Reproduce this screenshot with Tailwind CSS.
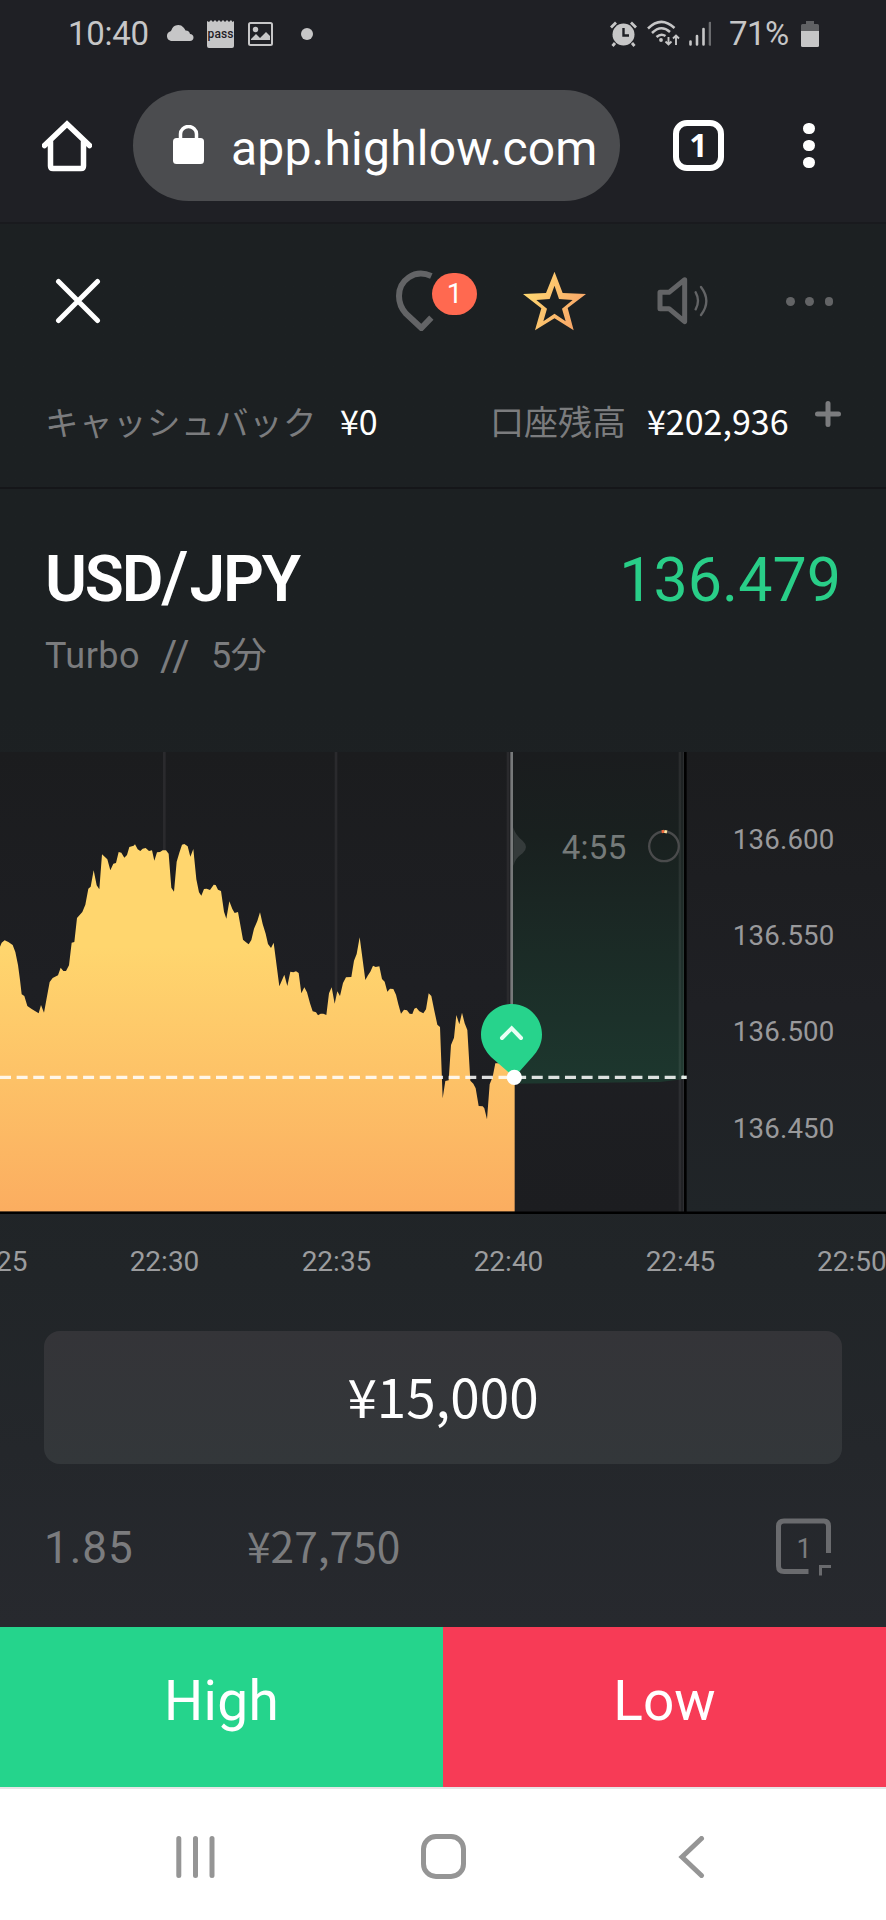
<!DOCTYPE html>
<html lang="ja">
<head>
  <meta charset="UTF-8" />
  <meta name="viewport" content="width=device-width, initial-scale=1.0"/>
  <title>USD/JPY - HighLow</title>

  <!-- Tailwind CSS -->
  <script src="https://cdn.jsdelivr.net/npm/@tailwindcss/browser@4"></script>
</head>
<body class="w-[886px] h-[1920px] overflow-hidden bg-[#1f2025] font-['Roboto','Noto_Sans_CJK_JP',sans-serif] text-white">

  <!-- Status bar -->
  <div class="flex items-center h-[67px] text-[#c6c6c7] text-[33px] leading-none">
    <span class="ml-[68px] w-[80px] tracking-[-0.3px]">10:40</span>
    <svg class="ml-[18px] mb-px" width="28" height="16" viewBox="0 0 28 16" fill="currentColor"><path d="M5 16a5 5 0 0 1-1-9.5C5 6 5 6 5.5 5a7 7 0 0 1 12-2.500c1 1 1.500 2 2 3 3 0 4 1.500 4.500 3.500 2 0 3.500 1.500 3.500 3.500S26 16 24 16z"/></svg>
    <svg class="ml-[13px]" width="27" height="28" viewBox="0 0 27 28"><path d="M0 1l2 1 2-2 2 2 2-2 2 2 2-2 2 2 2-2 2 2 2-2 2 2 2-2 1.500 2 1.500-1v25a2 2 0 0 1-2 2H2a2 2 0 0 1-2-2z" fill="#c6c6c7"/><text x="13.500" y="18" text-anchor="middle" font-size="12" font-weight="500" textLength="26" fill="#1f2025">pass</text></svg>
    <svg class="ml-[14px]" width="25" height="24" viewBox="0 0 25 24"><rect x="1" y="1" width="23" height="22" rx="1.500" fill="none" stroke="#c6c6c7" stroke-width="2"/><circle cx="7.500" cy="7.500" r="2.700" fill="#c6c6c7"/><path d="M3 17l5-5 4 4 6-6 4 4v4H3z" fill="#c6c6c7"/></svg>
    <span class="ml-[28px] size-3 rounded-full bg-[#c6c6c7]"></span>

    <svg class="ml-[297px]" width="27" height="26" viewBox="0 0 27 26"><circle cx="13.500" cy="13.500" r="11" fill="#c6c6c7"/><path d="M1 6.500l5-5M26 6.500l-5-5M5 22l-2.500 3M22 22l2.500 3" stroke="#c6c6c7" stroke-width="2.800"/><path d="M13.500 7v7.500h5.500" fill="none" stroke="#1f2025" stroke-width="2.400"/></svg>
    <svg class="ml-[10px]" width="33" height="27" viewBox="0 0 33 27" fill="none" stroke="#c6c6c7" stroke-width="2.500"><path d="M1 8.500Q14 -4.500 27.500 8M5 13Q14 4 23 12M9.500 17Q14 13 18.500 16"/><circle cx="14" cy="20" r="1.900" fill="#c6c6c7" stroke="none"/><path d="M21.500 17v7M18.500 21.500l3 3 3-3M29 25v-8M26 18.500l3-3 3 3" stroke-width="1.900"/></svg>
    <svg class="ml-[9px]" width="22" height="26" viewBox="0 0 22 26" fill="none" stroke="#c6c6c7" stroke-width="2.600" stroke-linecap="round"><path d="M1.500 20.500v3M8 15v8.500M14.500 8v15.500"/><path d="M21 2v21.500" stroke="#6b6c6f"/></svg>
    <span class="ml-[18px] w-[62px] tracking-[-0.5px]">71%</span>
    <svg class="ml-[10px]" width="18" height="26" viewBox="0 0 18 26"><path d="M5 0h8v3h3.500a1.500 1.500 0 0 1 1.500 1.500V10H0V4.500A1.500 1.500 0 0 1 1.500 3H5z" fill="#606164"/><path d="M0 10h18v14.500a1.500 1.500 0 0 1-1.500 1.500h-15A1.500 1.500 0 0 1 0 24.500z" fill="#c6c6c7"/></svg>
  </div>

  <!-- Browser toolbar -->
  <div class="flex items-center h-[157px] pt-0.5 border-b-2 border-[#191a1e]">
    <svg class="ml-[42px]" width="50" height="52" viewBox="0 0 50 52" fill="none" stroke="white" stroke-linejoin="round" stroke-linecap="round"><path d="M2.500 25.500L25 4l22.500 21.500" stroke-width="5.500" stroke-linejoin="miter"/><path d="M8.500 22v24q0 2.500 2.500 2.500h28q2.500 0 2.500-2.500V22" stroke-width="5.500"/></svg>
    <div class="flex items-center ml-[41px] w-[487px] h-[111px] rounded-full bg-[#4b4c4f]">
      <svg class="ml-[40px] mb-0.5" width="31" height="40" viewBox="0 0 31 40"><rect y="13" width="31" height="26" rx="3.500" fill="white"/><path d="M7.500 14V9a8 7.500 0 0 1 16 0v5" fill="none" stroke="white" stroke-width="3.500"/></svg>
      <span class="ml-[27px] mt-[6px] text-[48px] leading-none tracking-[0.2px]">app.highlow.com</span>
    </div>
    <div class="flex items-center justify-center ml-[53px] size-[51px] pb-0.5 rounded-[14px] border-[6px] border-white font-['Noto_Sans',sans-serif] font-bold text-[32px] leading-none">1</div>
    <div class="flex flex-col gap-[5.500px] ml-[79px]">
      <span class="size-[11.500px] rounded-full bg-white"></span>
      <span class="size-[11.500px] rounded-full bg-white"></span>
      <span class="size-[11.500px] rounded-full bg-white"></span>
    </div>
  </div>

  <!-- App -->
  <main class="h-[1403px] bg-linear-to-b from-[#1c2022] from-35% via-[#212528] via-75% to-[#27292e]">

    <header class="h-[265px] border-b-2 border-[#151619]">
      <div class="flex items-start h-[150px] pt-[46px] text-[#636466]">
        <svg class="ml-[55px] mt-[8px]" width="46" height="46" viewBox="0 0 46 46" stroke="white" stroke-width="5" stroke-linecap="round"><path d="M3.500 3.500l39 39M42.500 3.500l-39 39"/></svg>
        <div class="relative ml-[295px]">
          <svg width="40" height="61" viewBox="0 0 120 183" fill="none" stroke="currentColor" stroke-width="18"><path d="M106 18C55 -5 9 32 9 78C9 102 18 118 30 131L76 174L106 143"/></svg>
          <span class="absolute left-[36px] top-[3px] flex items-center justify-center w-[45px] h-[42px] rounded-full bg-[#ff6950] text-white text-[28px] leading-none">1</span>
        </div>
        <svg class="ml-[86px]" width="65" height="62" viewBox="0 0 195 186">
          <defs>
            <linearGradient id="starFill" x1="0" y1="0.300" x2="1" y2="0.700">
              <stop offset="0" stop-color="#ffdb72"/>
              <stop offset="1" stop-color="#f8a267"/>
            </linearGradient>
          </defs>
          <path fill="url(#starFill)" fill-rule="evenodd" d="M97.500 5L122 69L192 72L137 114L155 181L97.500 145L39 181L58 115L3 72L72 69ZM97.500 47L83 87L43 90L75 116L64 154L97.500 131L131 154L120 116L152 90L111 87Z"/>
        </svg>
        <svg class="ml-[69.500px] mt-[5px]" width="54" height="52" viewBox="0 0 162 156" fill="none" stroke="currentColor" stroke-linejoin="round" stroke-linecap="round"><path d="M9 52v49h27l47 39V14L36 52z" stroke-width="15"/><path d="M116 52q14 25 0 51M132 36q32 42 0 84" stroke-width="7"/></svg>
        <div class="flex gap-[10.700px] ml-[75.500px] mt-[27px]">
          <span class="size-[8.700px] rounded-full bg-current"></span>
          <span class="size-[8.700px] rounded-full bg-current"></span>
          <span class="size-[8.700px] rounded-full bg-current"></span>
        </div>
      </div>
      <div class="flex items-center h-[96px] pb-[3px] font-['Noto_Sans_CJK_JP',sans-serif] text-[33.500px] leading-none text-[#7b7c7e]">
        <span class="ml-[45px] w-[276px] tracking-[0.500px]">キャッシュバック</span>
        <span class="ml-[19px] w-[150px] text-[34px] text-white">¥0</span>
        <span class="w-[157px] text-[34px]">口座残高</span>
        <span class="w-[167px] text-[34px] text-white">¥202,936</span>
        <svg class="mb-[14px]" width="28" height="28" viewBox="0 0 28 28" stroke="currentColor" stroke-width="5" stroke-linecap="round"><path d="M14 3.500v21M3.500 14h21"/></svg>
      </div>
    </header>

    <section class="h-[263px] px-[45px] pt-[58px]">
      <div class="flex justify-between items-center h-[66px] leading-none">
        <h1 class="pb-[6px] text-[64px] font-semibold tracking-[-2.200px]">USD<span class="text-[70px] font-medium tracking-[1px]">/</span>JPY</h1>
        <span class="text-[61px] text-[#29ce88]">136.479</span>
      </div>
      <div class="flex items-center h-[50px] mt-[18px] text-[36px] leading-none text-[#7b7c7e]">
        <span class="w-[115px] tracking-[0.5px]">Turbo</span>
        <span class="w-[51px] text-[42px] tracking-[-0.5px]">//</span>
        <span class="tracking-[-0.5px]">5分</span>
      </div>
    </section>

    <!-- Chart -->
    <svg class="block" width="886" height="462" viewBox="0 36 2658 1386">
      <defs>
        <linearGradient id="plot" x1="0" y1="0" x2="0" y2="1">
          <stop offset="0" stop-color="#1b1c1e"/>
          <stop offset="0.500" stop-color="#1e1f23"/>
          <stop offset="1" stop-color="#1c1d20"/>
        </linearGradient>
        <linearGradient id="axis" x1="0" y1="0" x2="0" y2="1">
          <stop offset="0" stop-color="#1b1c1e"/>
          <stop offset="0.550" stop-color="#1f2024"/>
          <stop offset="1" stop-color="#202528"/>
        </linearGradient>
        <linearGradient id="area" gradientUnits="userSpaceOnUse" x1="0" y1="620" x2="0" y2="1415">
          <stop offset="0" stop-color="#ffd66e"/>
          <stop offset="1" stop-color="#fbad60"/>
        </linearGradient>
        <linearGradient id="zone" x1="0" y1="0" x2="0" y2="1">
          <stop offset="0" stop-color="#1a1c1e"/>
          <stop offset="0.250" stop-color="#19201f"/>
          <stop offset="1" stop-color="#1d372e"/>
        </linearGradient>
      </defs>
      <rect y="36" width="2052" height="1386" fill="url(#plot)"/>
      <rect x="2052" y="36" width="606" height="1386" fill="url(#axis)"/>
      <path d="M493 36V1415M1008 36V1415M1524 36V1415" stroke="#2a2a2d" stroke-width="8"/>
      <polygon fill="url(#zone)" points="1536,36 2052,36 2052,1017 1980,1026 1536,1031"/>
      <path d="M2040 36V1415" stroke="#ffffff" stroke-opacity="0.070" stroke-width="8"/>
      <path d="M2050 36V1415" stroke="#ffffff" stroke-opacity="0.080" stroke-width="4"/>

      <polygon fill="url(#area)" points="0,1415 0,620 5,608 14,601 25,606 38,615 46,636 54,675 60,720 65,763 73,768 82,798 95,807 116,820 123,795 132,818 139,780 149,726 158,714 174,706 182,683 190,693 198,693 207,676 215,608 223,606 231,534 247,516 256,494 265,446 272,440 281,391 290,436 298,448 306,343 322,358 331,391 340,371 348,369 356,336 364,338 373,353 381,345 388,321 401,317 405,313 413,328 421,333 428,326 437,324 447,333 456,331 463,362 471,337 480,336 488,331 498,331 506,341 514,443 522,455 530,365 538,338 546,314 553,312 563,319 571,350 580,327 589,418 597,457 604,467 612,447 620,446 630,450 641,434 647,435 654,449 663,453 672,515 679,536 688,484 697,507 704,519 714,516 729,599 738,607 746,613 754,600 762,566 772,543 780,517 788,552 797,581 804,612 813,624 821,608 838,739 853,704 862,738 871,695 880,697 888,694 896,699 904,760 913,742 921,757 930,790 938,814 948,817 954,826 962,821 970,821 979,825 987,760 995,742 1004,791 1012,754 1020,768 1029,729 1038,712 1054,711 1062,662 1070,642 1079,592 1096,720 1104,706 1111,695 1119,677 1127,681 1138,679 1146,717 1154,725 1162,755 1170,746 1180,747 1188,764 1195,793 1203,821 1212,809 1221,811 1229,821 1237,822 1243,806 1249,803 1258,814 1270,820 1278,808 1286,760 1294,768 1303,812 1312,854 1320,861 1328,1075 1336,1023 1346,1021 1353,915 1362,893 1369,825 1378,853 1386,818 1394,850 1402,870 1411,1022 1420,1031 1427,1045 1436,1098 1448,1099 1453,1105 1461,1138 1469,1033 1478,1010 1486,970 1544,970 1544,1415"/>

      <path d="M1535 36V830" stroke="#77797a" stroke-width="8"/>
      <path d="M1540 262Q1545 285 1568 302Q1588 321 1568 340Q1545 355 1540 378Z" fill="#353b3b"/>
      <text x="1685" y="356" font-size="99" fill="#757a79" letter-spacing="1">4:55</text>
      <circle cx="1992" cy="319" r="44.500" fill="none" stroke="#4a4b4c" stroke-width="7"/>
      <path d="M1985 275L1993 274" stroke="#f2693c" stroke-width="9"/>
      <path d="M1993 274L2001 276" stroke="#ffe3a0" stroke-width="9"/>

      <path d="M0 1012H2060" stroke="#fff" stroke-opacity="0.850" stroke-width="10" stroke-dasharray="33 16.850"/>
      <path d="M2056 36V1422" stroke="#000" stroke-width="8"/>
      <path d="M2046 1012h14" stroke="#e4ece8" stroke-width="10"/>
      <path d="M0 1418.500H2658" stroke="#000" stroke-width="8"/>

      <!-- Entry marker -->
      <path d="M1535 792C1586 792 1626 833 1626 884C1626 912 1613 933 1597 951L1543 1012L1473 951C1457 933 1443 912 1443 884C1443 833 1484 792 1535 792Z" fill="#27d38c"/>
      <path d="M1506 894l29-29 28 29" fill="none" stroke="#e9fff5" stroke-width="12" stroke-linecap="round"/>
      <circle cx="1543" cy="1012" r="23" fill="#fff"/>

      <g font-size="83" fill="#99999b" letter-spacing="0.600">
        <text x="2198" y="326">136.600</text>
        <text x="2198" y="615">136.550</text>
        <text x="2198" y="904">136.500</text>
        <text x="2198" y="1193">136.450</text>
      </g>
    </svg>

    <!-- Time axis -->
    <div class="flex h-[117px] pt-[34px] overflow-hidden text-[28px] leading-[28px] text-[#9b9c9e] text-center">
      <span class="w-[78.500px] shrink-0 flex justify-end pr-[51px]">22:25</span>
      <span class="w-[172px] shrink-0">22:30</span>
      <span class="w-[172px] shrink-0">22:35</span>
      <span class="w-[172px] shrink-0">22:40</span>
      <span class="w-[172px] shrink-0">22:45</span>
      <span class="w-[119.500px] shrink-0 pl-[50.500px] text-left">22:50</span>
    </div>

    <!-- Amount -->
    <div class="mx-[44px] h-[133px] pb-[5px] flex items-center justify-center rounded-[16px] bg-linear-to-b from-[#343438] to-[#33373a] font-['Noto_Sans_CJK_JP',sans-serif] text-[53px] leading-none">¥15,000</div>

    <div class="flex items-center h-[163px] text-[44px] leading-none text-[#7b7c7e]">
      <span class="ml-[44px] w-[203px] pt-1 tracking-[1px]">1.85</span>
      <span class="w-[529px] font-['Noto_Sans_CJK_JP',sans-serif] text-[42.500px]">¥27,750</span>
      <svg class="mt-[3px]" width="56" height="58" viewBox="0 0 56 58" fill="none" stroke="#6a6b6e"><path d="M32.500 53.500H8q-5.500 0-5.500-5.500V8.500Q2.500 3 8 3h40q4.500 0 4.500 5.500V35" stroke-width="5"/><path d="M44.500 57.500V48.500H55" stroke-width="3"/><text x="28" y="40" text-anchor="middle" font-size="27" fill="#7b7c7e" stroke="none">1</text></svg>
    </div>
  </main>

  <!-- High / Low -->
  <div class="flex h-[160px] text-[55px] leading-none">
    <button class="w-1/2 pb-3 bg-[#25d48c] tracking-[0.3px]">High</button>
    <button class="w-1/2 pb-3 bg-[#f73b56]">Low</button>
  </div>

  <!-- Android navigation -->
  <nav class="flex items-center h-[133px] pt-[4px] bg-white border-t-2 border-[#e6e6e6]">
    <svg class="ml-[176px]" width="39" height="42" viewBox="0 0 39 42" stroke="#959595" stroke-width="5" stroke-linecap="round"><path d="M2.800 2.500v37M19.500 2.500v37M36 2.500v37"/></svg>
    <span class="ml-[206px] size-[45px] rounded-[15px] border-[5.500px] border-[#959595]"></span>
    <svg class="ml-[212px]" width="27" height="42" viewBox="0 0 27 42" fill="none" stroke="#959595" stroke-width="5" stroke-linecap="round"><path d="M23.500 2.500L4 21l19.500 18.500"/></svg>
  </nav>
</body>
</html>
